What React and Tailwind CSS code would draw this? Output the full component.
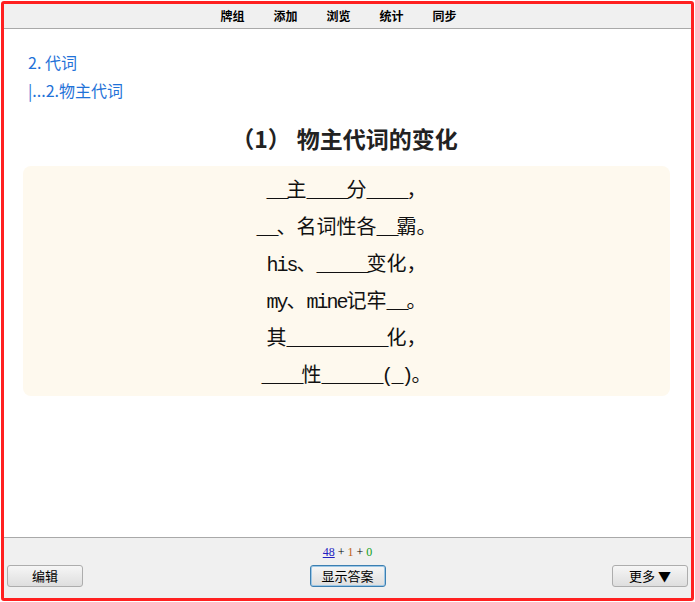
const cjk = { fontFamily: '"Noto Sans CJK SC", sans-serif' }

const lines = [
  '__主____分____，',
  '__、名词性各__霸。',
  'his、_____变化，',
  'my、mine记牢__。',
  '其__________化，',
  '____性______(_)。',
]

// ascii runs go in a mono face squeezed to half the CJK width
function Line({ text }) {
  const parts = text.match(/[\x00-\x7f]+|[^\x00-\x7f]+/g)
  return (
    <div className="leading-[37px] h-[37px]">
      {parts.map((p, i) =>
        /^[\x00-\x7f]/.test(p) ? (
          <span key={i} className="font-['Liberation_Mono',monospace] tracking-[-2px]">{p}</span>
        ) : (
          <span key={i}>{p}</span>
        )
      )}
    </div>
  )
}

function Btn({ children, focus }) {
  return (
    <button
      className={`h-[22px] w-[76px] rounded-[3px] border text-[13px] text-black bg-gradient-to-b from-[#f6f6f6] to-[#dedede] ${
        focus ? 'border-[#3c7fb1] shadow-[inset_0_0_0_1px_#9cc7e6]' : 'border-[#adadad]'
      }`}
    >
      {children}
    </button>
  )
}

export default function App() {
  return (
    <div className="w-[695px] h-[602px] bg-white p-px" style={cjk}>
      <div className="h-full flex flex-col border-[3px] border-[#ff2020] rounded-[3px] overflow-hidden">
        <div className="h-[25px] shrink-0 bg-[#f0f0f0] border-b border-[#a9a9a9] flex justify-center items-center gap-[29px] pr-[18px] text-[12px] font-bold text-black">
          <span>牌组</span>
          <span>添加</span>
          <span>浏览</span>
          <span>统计</span>
          <span>同步</span>
        </div>

        <div className="flex-1 bg-white">
          <div className="pl-6 pt-[19px] text-[16px] text-[#1f72d8] leading-[28px]">
            <div>2. 代词</div>
            <div>|...2.物主代词</div>
          </div>
          <div className="text-center text-[23px] font-bold text-[#222] mt-[17px] pr-[6px] leading-[34px]">
            （1）<span className="ml-[6px]">物主代词的变化</span>
          </div>
          <div className="ml-[19px] w-[647px] mt-[11px] rounded-lg bg-[#fef9ee] py-[4px] text-center text-[20px] text-[#111]">
            {lines.map((l) => (
              <Line key={l} text={l} />
            ))}
          </div>
        </div>

        <div className="h-[61px] shrink-0 bg-[#f0f0f0] border-t border-[#a9a9a9] flex flex-col">
          <div className="h-[27px] flex items-center justify-center text-[12px] font-['Liberation_Serif',serif]">
            <span className="text-[#2020c0] underline">48</span>
            <span className="mx-[3px]">+</span>
            <span className="text-[#c06010]">1</span>
            <span className="mx-[3px]">+</span>
            <span className="text-[#10a020]">0</span>
          </div>
          <div className="flex items-start justify-between px-[3px]">
            <Btn>编辑</Btn>
            <Btn focus>显示答案</Btn>
            <Btn>更多 ▼</Btn>
          </div>
        </div>
      </div>
    </div>
  )
}
